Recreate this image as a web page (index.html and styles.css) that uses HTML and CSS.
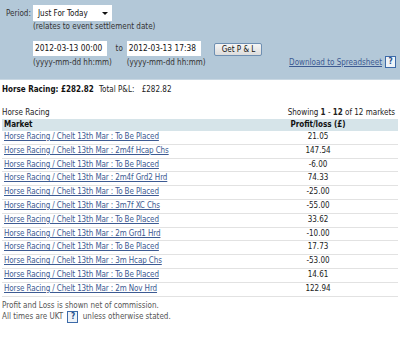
FILE: index.html
```html
<!DOCTYPE html>
<html>
<head>
<meta charset="utf-8">
<link rel="stylesheet" href="styles.css">
</head>
<body>
<div class="panel">
  <div class="period">
    <span class="lbl">Period:</span>
    <div class="select"><span>Just For Today</span><span class="arrow"></span></div>
  </div>
  <div class="note">(relates to event settlement date)</div>
  <div class="dates">
    <div class="dcol">
      <div class="input">2012-03-13 00:00</div>
      <div class="hint">(yyyy-mm-dd hh:mm)</div>
    </div>
    <span class="to">to</span>
    <div class="dcol">
      <div class="input">2012-03-13 17:38</div>
      <div class="hint">(yyyy-mm-dd hh:mm)</div>
    </div>
    <button class="btn">Get P &amp; L</button>
    <div class="dl">
      <a href="#" class="link">Download to Spreadsheet</a>
      <span class="q">?</span>
    </div>
  </div>
</div>
<div class="summary">
  <b>Horse Racing: £282.82</b>
  <span class="total">Total P&amp;L:</span>
  <span class="totalv">£282.82</span>
</div>
<div class="section">
  <span>Horse Racing</span>
  <span class="showing">Showing <b>1</b> - <b>12</b> of 12 markets</span>
</div>
<table class="pl">
  <thead>
    <tr><th class="m">Market</th><th class="v">Profit/loss (£)</th></tr>
  </thead>
  <tbody>
    <tr><td><a href="#">Horse Racing / Chelt 13th Mar : To Be Placed</a></td><td class="v">21.05</td></tr>
    <tr><td><a href="#">Horse Racing / Chelt 13th Mar : 2m4f Hcap Chs</a></td><td class="v">147.54</td></tr>
    <tr><td><a href="#">Horse Racing / Chelt 13th Mar : To Be Placed</a></td><td class="v">-6.00</td></tr>
    <tr><td><a href="#">Horse Racing / Chelt 13th Mar : 2m4f Grd2 Hrd</a></td><td class="v">74.33</td></tr>
    <tr><td><a href="#">Horse Racing / Chelt 13th Mar : To Be Placed</a></td><td class="v">-25.00</td></tr>
    <tr><td><a href="#">Horse Racing / Chelt 13th Mar : 3m7f XC Chs</a></td><td class="v">-55.00</td></tr>
    <tr><td><a href="#">Horse Racing / Chelt 13th Mar : To Be Placed</a></td><td class="v">33.62</td></tr>
    <tr><td><a href="#">Horse Racing / Chelt 13th Mar : 2m Grd1 Hrd</a></td><td class="v">-10.00</td></tr>
    <tr><td><a href="#">Horse Racing / Chelt 13th Mar : To Be Placed</a></td><td class="v">17.73</td></tr>
    <tr><td><a href="#">Horse Racing / Chelt 13th Mar : 3m Hcap Chs</a></td><td class="v">-53.00</td></tr>
    <tr><td><a href="#">Horse Racing / Chelt 13th Mar : To Be Placed</a></td><td class="v">14.61</td></tr>
    <tr><td><a href="#">Horse Racing / Chelt 13th Mar : 2m Nov Hrd</a></td><td class="v">122.94</td></tr>
  </tbody>
</table>
<div class="foot">
  <div>Profit and Loss is shown net of commission.</div>
  <div class="f2">All times are UKT <span class="q">?</span> unless otherwise stated.</div>
</div>
</body>
</html>
```
FILE: styles.css
```css
html, body {
  margin: 0;
  padding: 0;
  background: #fff;
}
body {
  font-family: "DejaVu Sans Condensed", "DejaVu Sans", sans-serif;
  font-size: 8px;
  color: #222;
  width: 400px;
}
.panel {
  background: #b3c8d8;
  height: 80px;
  box-sizing: border-box;
  padding: 5px 0 0 0;
  border-bottom: 1px solid #c9d8e3;
}
.period {
  display: flex;
  align-items: center;
  height: 16px;
}
.lbl {
  width: 33px;
  padding-left: 6px;
  box-sizing: border-box;
  color: #333;
}
.select {
  width: 79px;
  height: 16px;
  background: #fff;
  display: flex;
  align-items: center;
  justify-content: space-between;
  box-sizing: border-box;
  padding: 0 4px 0 5px;
  color: #111;
}
.arrow {
  width: 0;
  height: 0;
  border-left: 3px solid transparent;
  border-right: 3px solid transparent;
  border-top: 3px solid #111;
}
.note {
  margin-left: 33px;
  height: 10px;
  line-height: 10px;
  margin-top: 1px;
  color: #333;
}
.dates {
  display: flex;
  align-items: flex-start;
  margin-top: 9px;
  padding-left: 33px;
  padding-right: 4px;
}
.dcol {
  display: flex;
  flex-direction: column;
}
.input {
  width: 74px;
  height: 15px;
  line-height: 15px;
  background: #fff;
  box-sizing: border-box;
  padding-left: 2px;
  color: #111;
  font-size: 8.3px;
}
.hint {
  margin-top: 2px;
  line-height: 10px;
  color: #333;
}
.to {
  width: 15px;
  text-align: center;
  line-height: 15px;
  color: #333;
}
.btn {
  margin: 2px 0 0 9px;
  width: 48px;
  height: 13px;
  padding: 0;
  font: inherit;
  color: #111;
  background: linear-gradient(#f6f6f6, #dcdcdc);
  border: 1px solid #6e8fb2;
  border-radius: 2px;
}
.dl {
  margin-left: auto;
  margin-top: 15px;
  display: flex;
  align-items: center;
}
.link {
  color: #3c5a92;
  text-decoration: underline;
}
.q {
  display: inline-block;
  width: 9px;
  height: 10px;
  line-height: 10px;
  border: 1px solid #3c6aa8;
  color: #234e8a;
  font-weight: bold;
  text-align: center;
  margin-left: 3px;
  background: #eef3f8;
}
.summary {
  padding: 3px 2px 0;
  height: 13px;
  line-height: 13px;
  color: #222;
}
.summary b {
  color: #111;
}
.total {
  margin-left: 3px;
}
.totalv {
  margin-left: 5px;
}
.section {
  display: flex;
  justify-content: space-between;
  padding: 0 5px 0 2px;
  margin-top: 11px;
  line-height: 12px;
  color: #222;
}
.pl {
  width: 396px;
  margin: 0 2px;
  border-collapse: collapse;
}
.pl th {
  background: #d6e4e9;
  height: 12px;
  padding: 0 2px;
  line-height: 12px;
  font-weight: bold;
  color: #111;
}
.pl th.m {
  text-align: left;
}
.pl .v {
  width: 156px;
  text-align: center;
}
.pl td {
  height: 12.8px;
  padding: 0 2px;
  line-height: 12.8px;
  border-bottom: 1px solid #e2e2e2;
  color: #222;
}
.pl td a {
  color: #3c5a92;
  text-decoration: underline;
  letter-spacing: -0.12px;
}
.foot {
  margin-top: 3px;
  padding-left: 2px;
  color: #555;
  line-height: 11px;
}
.foot .q {
  margin: 0 2px;
}
```
